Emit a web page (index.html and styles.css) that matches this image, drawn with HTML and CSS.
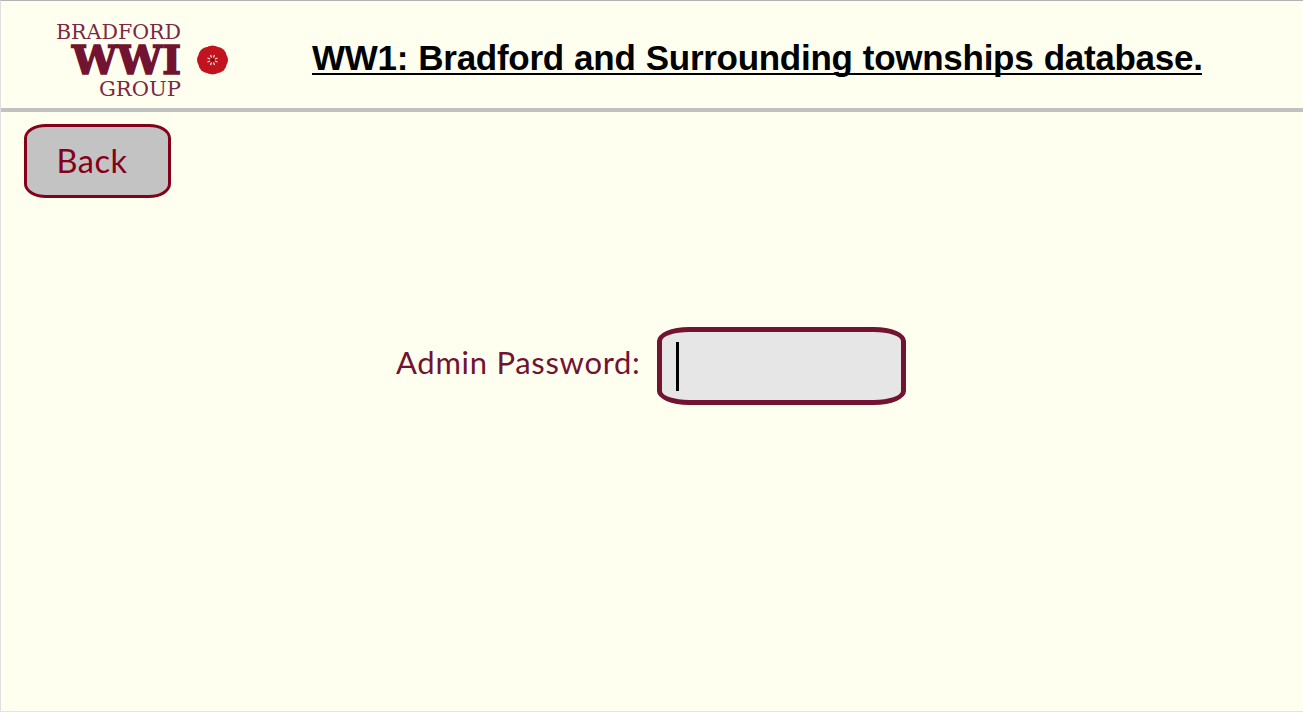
FILE: index.html
```
<!DOCTYPE html>
<html lang="en">
<head>
<meta charset="utf-8">
<title>WW1: Bradford and Surrounding townships database</title>
<link rel="stylesheet" href="styles.css">
</head>
<body>
<div class="window">
  <header class="header">
    <svg class="logo" viewBox="0 0 184 90" role="img" aria-label="Bradford WWI Group">
      <g class="logo-light">
        <text x="6" y="26" font-size="20" textLength="125" lengthAdjust="spacingAndGlyphs">BRADFORD</text>
        <text x="49" y="82.500" font-size="20" textLength="82" lengthAdjust="spacingAndGlyphs">GROUP</text>
      </g>
      <text class="logo-bold" x="22" y="60.500" font-size="39" textLength="109" lengthAdjust="spacingAndGlyphs">WWI</text>
      <g transform="translate(162.500 47)">
        <g fill="#c1141f">
          <circle r="14"/>
          <circle cx="0" cy="-5.500" r="9"/><circle cx="5" cy="-4" r="9"/>
          <circle cx="6.500" cy="0" r="9"/><circle cx="5" cy="4" r="9"/>
          <circle cx="0" cy="5.500" r="9"/><circle cx="-5" cy="4" r="9"/>
          <circle cx="-6.500" cy="0" r="9"/><circle cx="-5" cy="-4" r="9"/>
        </g>
        <path d="M-2-5L-1-2.500M2-5L1-2.500M-2 5L-1 2.500M2 5L1 2.500M-5-2L-2.500-1M-5 2L-2.500 1M5-2L2.500-1M5 2L2.500 1" stroke="#fbe3dc" stroke-width="1.200" fill="none"/>
        <circle r="1.800" fill="#6d1430"/>
      </g>
    </svg>
    <h1 class="title"><span class="title-text">WW1: Bradford and Surrounding townships database.</span></h1>
  </header>
  <main class="content">
    <button class="back" type="button">Back</button>
    <div class="login">
      <span class="label">Admin Password:</span>
      <div class="field"><span class="caret"></span></div>
    </div>
  </main>
</div>
</body>
</html>
```
FILE: styles.css
```
* { box-sizing: border-box; }
body { margin: 0; }
.window {
  width: 1303px;
  height: 712px;
  background: #fffff0;
  border-top: 1px solid #b4b4b4;
  border-left: 1px solid #e0e0e0;
  border-bottom: 1px solid #e3e3e3;
  overflow: hidden;
}
.header {
  display: flex;
  height: 111px;
  padding: 12px 0 0 49px;
  border-bottom: 4px solid #c1c1c1;
}
.logo {
  flex: none;
  width: 184px;
  height: 90px;
  font-family: "DejaVu Serif", serif;
}
.logo-light { fill: #7c2746; }
.logo-bold { fill: #721431; stroke: #721431; stroke-width: 1.6px; font-weight: 700; }
.title {
  margin: 23px 0 0 78px;
  font: 700 35px/44px "Liberation Sans", Arial, sans-serif;
  letter-spacing: -.28px;
  word-spacing: .8px;
  white-space: nowrap;
  color: #000;
}
.title-text {
  display: block;
  width: 890px;
  height: 39px;
  border-bottom: 2px solid #000;
}
.content { padding: 12px 0 0 23px; }
.back {
  display: block;
  width: 147px;
  height: 74px;
  padding: 0 11px 0 0;
  border: 3px solid #850019;
  border-radius: 22px / 14px;
  background: #c3c3c3;
  color: #850019;
  font: 32.5px/1 Lato, sans-serif;
  letter-spacing: .5px;
}
.login {
  display: flex;
  margin: 129px 0 0 372px;
}
.label {
  width: 261px;
  padding-top: 17px;
  color: #721431;
  font: 31px/36px Lato, sans-serif;
  letter-spacing: .7px;
  white-space: nowrap;
}
.field {
  width: 249px;
  height: 78px;
  padding: 10px 14px;
  border: 5px solid #721431;
  border-radius: 32px / 14px;
  background: #e6e6e6;
}
.caret { display: block; width: 3px; height: 49px; background: #000; }
```
